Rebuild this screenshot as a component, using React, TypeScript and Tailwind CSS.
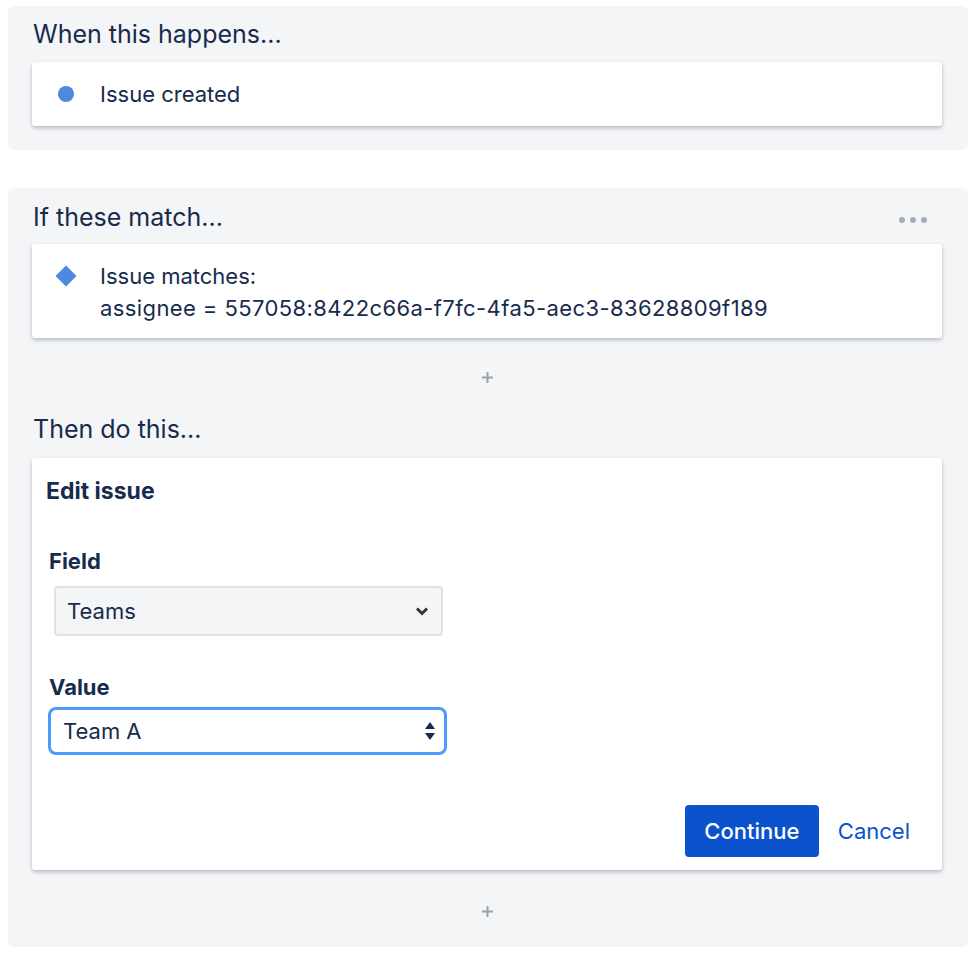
import React from "react";

const font = { fontFamily: "Inter, 'Noto Sans', sans-serif" };

function Plus() {
  return (
    <div className="flex justify-center">
      <svg width="13" height="13" viewBox="0 0 13 13">
        <path d="M6.5 1v11M1 6.5h11" stroke="#97a0af" strokeWidth="2" />
      </svg>
    </div>
  );
}

export default function App() {
  return (
    <div className="min-h-[958px] w-[972px] bg-white text-[#172b4d]" style={font}>
      <div className="pt-[6px] pl-[8px] pr-[4px]">
        {/* Panel 1 */}
        <div className="rounded-[5px] bg-[#f4f5f7] pl-6 pr-[26px] pt-[12px] pb-[24px]">
          <div className="pl-[1px] text-[25px] leading-[32px]">When this happens...</div>
          <div className="mt-[12px] flex h-[64px] items-center rounded-[3px] bg-white shadow-[0_2px_4px_rgba(9,30,66,0.28)]">
            <div className="ml-[26px] h-[16px] w-[16px] rounded-full bg-[#5088df]" />
            <div className="ml-[26px] text-[22px] leading-[32px]">Issue created</div>
          </div>
        </div>

        {/* Panel 2 */}
        <div className="mt-[38px] rounded-[5px] bg-[#f4f5f7] pl-6 pr-[26px] pt-[13px] pb-[29px]">
          <div className="flex items-center justify-between">
            <div className="pl-[1px] text-[25px] leading-[32px]">If these match...</div>
            <div className="mr-[15px] mt-[6px] flex gap-[5px]">
              <span className="h-[6px] w-[6px] rounded-full bg-[#a5adba]" />
              <span className="h-[6px] w-[6px] rounded-full bg-[#a5adba]" />
              <span className="h-[6px] w-[6px] rounded-full bg-[#a5adba]" />
            </div>
          </div>
          <div className="mt-[11px] flex rounded-[3px] bg-white pt-[16px] pb-[14px] shadow-[0_2px_4px_rgba(9,30,66,0.28)]">
            <div className="ml-[23px] mt-[5px] h-[22px] w-[22px] shrink-0">
              <svg width="22" height="22" viewBox="0 0 22 22">
                <path d="M11 0.5L21.5 11L11 21.5L0.5 11Z" fill="#5088df" />
              </svg>
            </div>
            <div className="ml-[23px] text-[22px] leading-[32px]">
              <div>Issue matches:</div>
              <div className="tracking-[0.4px]">assignee = 557058:8422c66a-f7fc-4fa5-aec3-83628809f189</div>
            </div>
          </div>
          <div className="mt-[33px]">
            <Plus />
          </div>
          <div className="mt-[29px] pl-[1px] text-[25px] leading-[32px]">Then do this...</div>
          <div className="mt-[13px] rounded-[3px] bg-white pt-[17px] pb-[13px] shadow-[0_2px_4px_rgba(9,30,66,0.28)]">
            <div className="pl-[14px] text-[23px] font-bold leading-[32px]">Edit issue</div>
            <div className="mt-[40px] pl-[17px] text-[22px] font-bold leading-[28px]">Field</div>
            <div className="ml-[22px] mt-[11px] flex h-[50px] w-[389px] items-center justify-between rounded-[4px] border-2 border-[#dfe1e6] bg-[#f4f5f7] pl-[11px] pr-[12px]">
              <span className="text-[22px]">Teams</span>
              <svg width="14" height="10" viewBox="0 0 14 10">
                <path d="M2 2.5L7 7.5L12 2.5" stroke="#333" strokeWidth="3" fill="none" />
              </svg>
            </div>
            <div className="mt-[37px] pl-[17px] text-[22px] font-bold leading-[28px]">Value</div>
            <div className="ml-[16px] mt-[6px] flex h-[48px] w-[399px] items-center justify-between rounded-[8px] border-[3px] border-[#4c9aff] bg-white pl-[12px] pr-[8px]">
              <span className="text-[22px]">Team A</span>
              <svg width="12" height="20" viewBox="0 0 12 20">
                <path d="M6 1L11 8H1Z" fill="#172b4d" />
                <path d="M6 19L11 12H1Z" fill="#172b4d" />
              </svg>
            </div>
            <div className="mt-[50px] flex items-center justify-end pr-[32px]">
              <button className="flex h-[52px] w-[134px] items-center justify-center rounded-[4px] bg-[#0b52cc] text-[22px] font-medium text-white">
                Continue
              </button>
              <span className="ml-[19px] text-[22px] text-[#0b52cc]">Cancel</span>
            </div>
          </div>
          <div className="mt-[35px]">
            <Plus />
          </div>
        </div>
      </div>
    </div>
  );
}
